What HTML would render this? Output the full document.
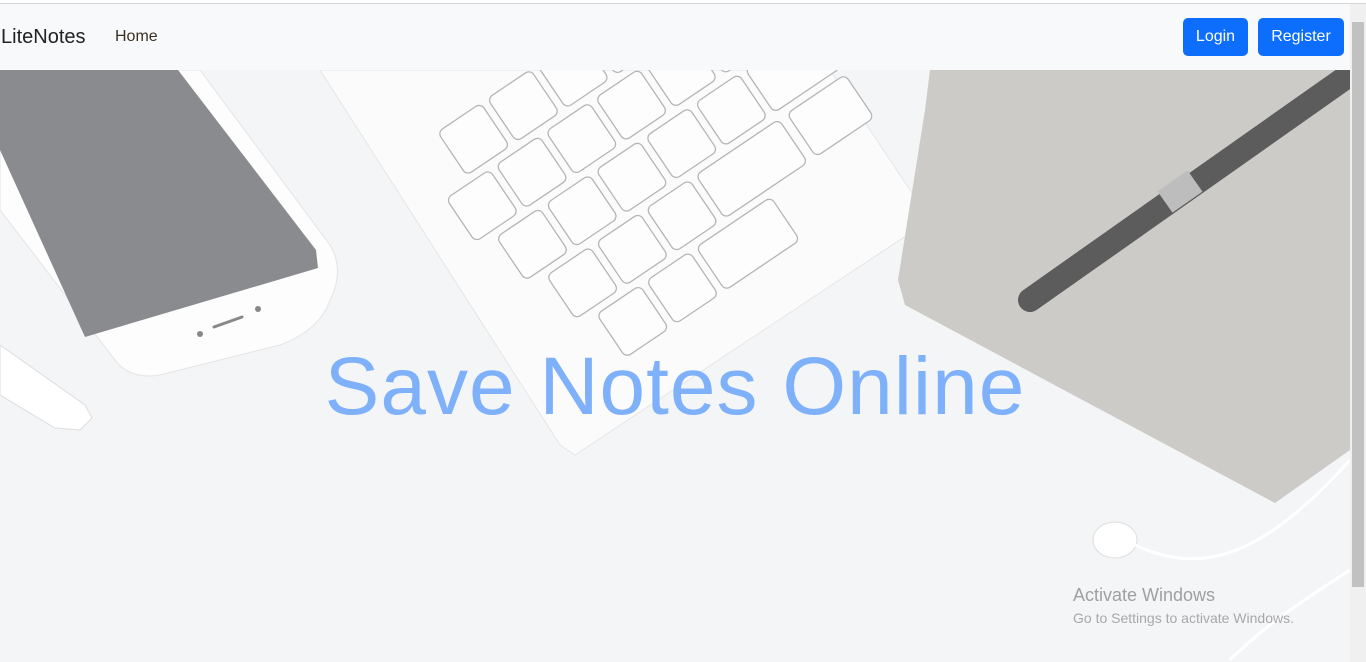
<!DOCTYPE html>
<html><head><meta charset="utf-8"><style>
html,body{margin:0;padding:0;width:1366px;height:662px;overflow:hidden;background:#f4f5f7;font-family:"Liberation Sans",sans-serif}
.top{position:absolute;left:0;top:0;width:1366px;height:3px;background:#fff;border-bottom:1px solid #d8d8d8}
nav{position:absolute;left:0;top:4px;width:1350px;height:66px;background:#f8f9fa}
.brand{position:absolute;left:1px;top:22px;font-size:20px;color:#222}
.home{position:absolute;left:115px;top:24px;font-size:16px;color:#3a3020}
.btn{position:absolute;top:14px;height:38px;background:#0d6efd;color:#fff;border-radius:5px;font-size:16px;line-height:38px;text-align:center}
.sb{position:absolute;left:1350px;top:4px;width:16px;height:658px;background:#f0f0f0}
.thumb{position:absolute;left:1352px;top:22px;width:12px;height:565px;background:#c1c1c1}
h1{position:absolute;left:0;width:1350px;top:340px;margin:0;text-align:center;font-weight:normal;font-size:82px;color:#7fb1fb;letter-spacing:1px}
.aw{position:absolute;left:1073px;top:585px;color:#a0a0a0;font-size:18px}
.aw2{position:absolute;left:1073px;top:610px;color:#a8a8a8;font-size:14px}
</style></head><body>
<svg style="position:absolute;left:0;top:70px" width="1350" height="592" viewBox="0 70 1350 592">
<rect x="0" y="70" width="1350" height="592" fill="#f4f5f7"/>
<polygon points="0,345 85,405 92,418 80,430 55,428 0,395" fill="#fff" stroke="#ddd"/>
<path d="M0,70 L200,70 L330,245 Q345,270 330,300 Q320,330 280,345 L160,375 Q130,380 115,360 L0,210 Z" fill="#fdfdfd" stroke="#e4e4e4"/>
<polygon points="0,70 178,70 316,250 318,268 85,337 0,150" fill="#8a8b8f"/>
<circle cx="200" cy="334" r="3" fill="#888"/><circle cx="258" cy="309" r="3" fill="#888"/>
<line x1="214" y1="327" x2="242" y2="317" stroke="#888" stroke-width="3" stroke-linecap="round"/>
<polygon points="320,70 830,70 930,220 575,455 560,445" fill="#fbfbfb" stroke="#e6e6e6"/>
<g transform="translate(710,250) rotate(-34)" fill="#fdfdfd" stroke="#b5b5b5" stroke-width="1.3">
<rect x="-160" y="-250" width="52" height="52" rx="6"/><rect x="-100" y="-250" width="52" height="52" rx="6"/><rect x="-40" y="-250" width="52" height="52" rx="6"/><rect x="20" y="-250" width="52" height="52" rx="6"/><rect x="80" y="-250" width="52" height="52" rx="6"/><rect x="140" y="-250" width="52" height="52" rx="6"/>
<rect x="-190" y="-190" width="52" height="52" rx="6"/><rect x="-130" y="-190" width="52" height="52" rx="6"/><rect x="-70" y="-190" width="52" height="52" rx="6"/><rect x="-10" y="-190" width="52" height="52" rx="6"/><rect x="50" y="-190" width="52" height="52" rx="6"/><rect x="110" y="-190" width="52" height="52" rx="6"/><rect x="170" y="-190" width="52" height="52" rx="6"/>
<rect x="-170" y="-130" width="52" height="52" rx="6"/><rect x="-110" y="-130" width="52" height="52" rx="6"/><rect x="-50" y="-130" width="52" height="52" rx="6"/><rect x="10" y="-130" width="52" height="52" rx="6"/><rect x="70" y="-130" width="52" height="52" rx="6"/><rect x="130" y="-130" width="80" height="52" rx="6"/>
<rect x="-150" y="-70" width="52" height="52" rx="6"/><rect x="-90" y="-70" width="52" height="52" rx="6"/><rect x="-30" y="-70" width="52" height="52" rx="6"/><rect x="30" y="-70" width="100" height="52" rx="6"/><rect x="140" y="-70" width="70" height="52" rx="6"/>
<rect x="-130" y="-10" width="52" height="52" rx="6"/><rect x="-70" y="-10" width="52" height="52" rx="6"/><rect x="-10" y="-10" width="90" height="52" rx="6"/>
</g>
<polygon points="930,70 1350,70 1350,450 1275,503 905,305 898,280 925,110" fill="#cdcbc8"/>
<line x1="1030" y1="300" x2="1345" y2="78" stroke="#5c5c5c" stroke-width="24" stroke-linecap="round"/>
<line x1="1165" y1="202" x2="1195" y2="181" stroke="#bdbdbd" stroke-width="26"/>
<ellipse cx="1115" cy="540" rx="22" ry="18" fill="#fff" stroke="#ddd"/>
<path d="M1135,545 C1200,575 1260,560 1350,460" fill="none" stroke="#fff" stroke-width="3"/>
<path d="M1230,660 C1270,620 1320,590 1350,570" fill="none" stroke="#fff" stroke-width="3"/>
</svg>
<div class="top"></div>
<nav><div class="brand">LiteNotes</div><div class="home">Home</div>
<div class="btn" style="left:1183px;width:65px">Login</div>
<div class="btn" style="left:1258px;width:86px">Register</div></nav>
<h1>Save Notes Online</h1>
<div class="aw">Activate Windows</div>
<div class="aw2">Go to Settings to activate Windows.</div>
<div class="sb"></div><div class="thumb"></div>
</body></html>
